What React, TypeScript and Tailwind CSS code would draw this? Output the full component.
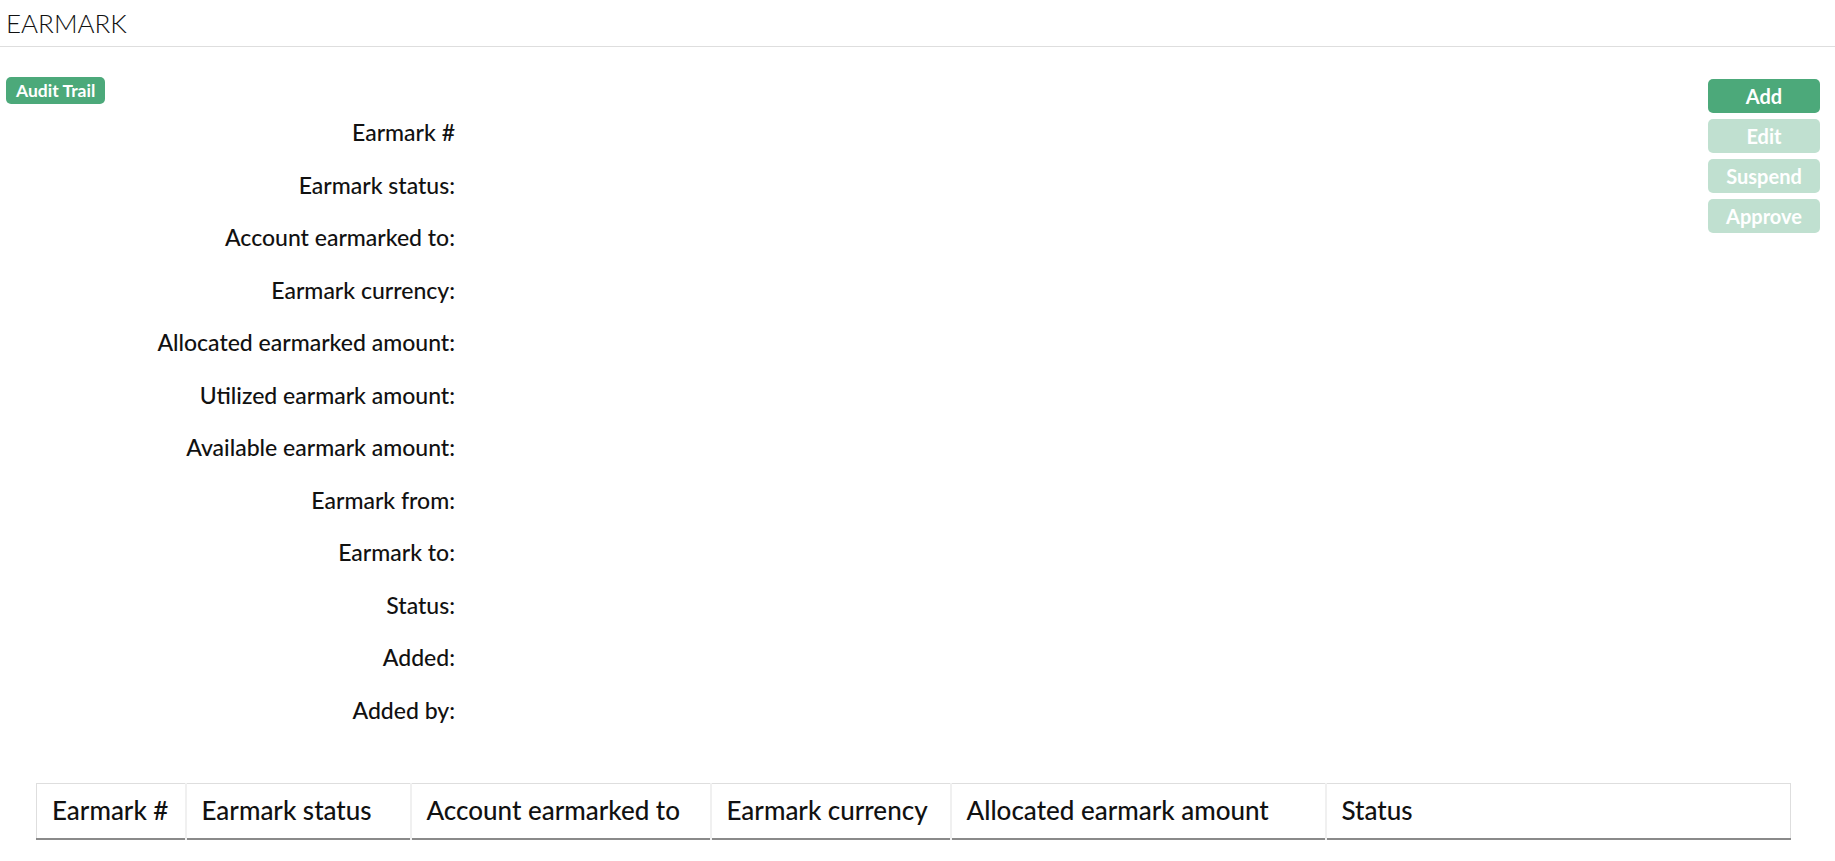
import React from 'react';

const fields = [
    'Earmark #',
    'Earmark status:',
    'Account earmarked to:',
    'Earmark currency:',
    'Allocated earmarked amount:',
    'Utilized earmark amount:',
    'Available earmark amount:',
    'Earmark from:',
    'Earmark to:',
    'Status:',
    'Added:',
    'Added by:',
];

const columns: { label: string; width: string }[] = [
    { label: 'Earmark #', width: 'w-[149px]' },
    { label: 'Earmark status', width: 'w-[225px]' },
    { label: 'Account earmarked to', width: 'w-[300px]' },
    { label: 'Earmark currency', width: 'w-[240px]' },
    { label: 'Allocated earmark amount', width: 'w-[375px]' },
    { label: 'Status', width: '' },
];

const ActionButton: React.FC<{ label: string; disabled?: boolean }> = ({ label, disabled = false }) => (
    <button
        disabled={disabled}
        className={`w-[112px] h-[34px] rounded-[5px] bg-[#4ca97a] text-white font-bold text-[20px] leading-none ${disabled ? 'opacity-35 cursor-default' : ''}`}
    >
        {label}
    </button>
);

const App: React.FC = () => {
    return (
        <div className="min-h-screen bg-white text-[#111] font-[Lato,sans-serif]">
            {/* Page title */}
            <div className="h-[47px] border-b border-[#dedede] pl-[6px] pt-[8px]">
                <h1 className="text-[26px] font-light leading-[30px]">EARMARK</h1>
            </div>

            <div className="flex justify-between pl-[6px] pr-[15px] pt-[30px]">
                <div>
                    <button className="h-[27px] px-[10px] rounded-[5px] bg-[#4ca97a] text-white font-bold text-[17.5px] leading-none">
                        Audit Trail
                    </button>

                    <div className="mt-[2px] w-[449px]">
                        {fields.map((f) => (
                            <div key={f} className="h-[52.5px] leading-[52.5px] text-right text-[23px] font-medium">
                                {f}
                            </div>
                        ))}
                    </div>
                </div>

                <div className="flex flex-col gap-[6px] pt-[2px]">
                    <ActionButton label="Add" />
                    <ActionButton label="Edit" disabled />
                    <ActionButton label="Suspend" disabled />
                    <ActionButton label="Approve" disabled />
                </div>
            </div>

            {/* Earmark list */}
            <div className="ml-[36px] mr-[44px] mt-[47px]">
                <table className="w-full table-fixed border border-[#dedede] border-collapse">
                    <thead>
                        <tr className="h-[55px] border-b-2 border-b-[#8a8a8a]">
                            {columns.map((c, i) => (
                                <th
                                    key={c.label}
                                    className={`${c.width} px-[15px] text-left text-[26px] font-medium whitespace-nowrap ${i < columns.length - 1 ? 'border-r-2 border-r-[#f0f0f0]' : ''}`}
                                >
                                    {c.label}
                                </th>
                            ))}
                        </tr>
                    </thead>
                </table>
            </div>
        </div>
    );
};

export default App;
